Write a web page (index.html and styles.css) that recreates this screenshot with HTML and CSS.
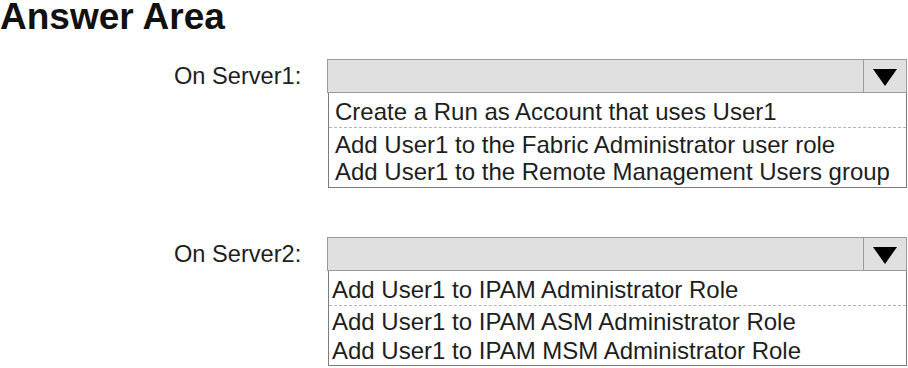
FILE: index.html
```html
<!DOCTYPE html>
<html lang="en">
<head>
  <meta charset="UTF-8">
  <title>Answer Area</title>
  <link rel="stylesheet" href="styles.css">
</head>
<body>

<h1 class="title">Answer Area</h1>

<div class="answers">
  <div class="answer-row">
    <div class="label">On Server1:</div>
    <div class="dropdown">
      <div class="dropdown-head">
        <div class="dropdown-value"></div>
        <div class="dropdown-arrow"><span class="triangle"></span></div>
      </div>
      <ul class="options">
        <li class="first">Create a Run as Account that uses User1</li>
        <li>Add User1 to the Fabric Administrator user role</li>
        <li>Add User1 to the Remote Management Users group</li>
      </ul>
    </div>
  </div>

  <div class="answer-row">
    <div class="label">On Server2:</div>
    <div class="dropdown">
      <div class="dropdown-head">
        <div class="dropdown-value"></div>
        <div class="dropdown-arrow"><span class="triangle"></span></div>
      </div>
      <ul class="options tight">
        <li class="first">Add User1 to IPAM Administrator Role</li>
        <li>Add User1 to IPAM ASM Administrator Role</li>
        <li>Add User1 to IPAM MSM Administrator Role</li>
      </ul>
    </div>
  </div>
</div>

</body>
</html>
```

FILE: styles.css
```css
body {
  margin: 0;
  background: #fff;
  font-family: 'Liberation Sans', Arial, sans-serif;
  color: #1e1e1e;
}
.title {
  margin: 0;
  font-size: 37px;
  line-height: 33px;
  font-weight: bold;
  color: #111;
}
.answers {
  padding-left: 174px;
  padding-top: 26px;
}
.answer-row {
  display: flex;
  margin-bottom: 49px;
}
.answer-row:last-child {
  margin-bottom: 0;
}
.label {
  width: 153px;
  font-size: 23.6px;
  line-height: 34px;
}
.dropdown {
  width: 580px;
  font-size: 24px;
}
.dropdown-head {
  display: flex;
  height: 32px;
  border: 1px solid #9a9a9a;
  background: #e0e0e0;
}
.dropdown-value {
  flex: 1;
}
.dropdown-arrow {
  width: 42px;
  border-left: 1px solid #9a9a9a;
  display: flex;
  align-items: center;
  justify-content: center;
}
.triangle {
  width: 0;
  height: 0;
  border-left: 12px solid transparent;
  border-right: 12px solid transparent;
  border-top: 17px solid #000;
  margin-top: 2px;
}
.options {
  list-style: none;
  margin: 0 0 0 1px;
  padding: 0 0 2px;
  border: 1px solid #7c7c7c;
  border-top: none;
}
.options li {
  line-height: 27px;
  padding-left: 6px;
  white-space: nowrap;
}
.options li.first {
  line-height: 31px;
  padding-top: 3px;
  margin-bottom: 3px;
  border-bottom: 1px dashed #b4b4b4;
}
.options.tight {
  padding-bottom: 0;
}
.options.tight li {
  line-height: 29px;
  padding-left: 3px;
}
.options.tight li.first {
  line-height: 30px;
  padding-top: 4px;
  margin-bottom: 1px;
}
```
